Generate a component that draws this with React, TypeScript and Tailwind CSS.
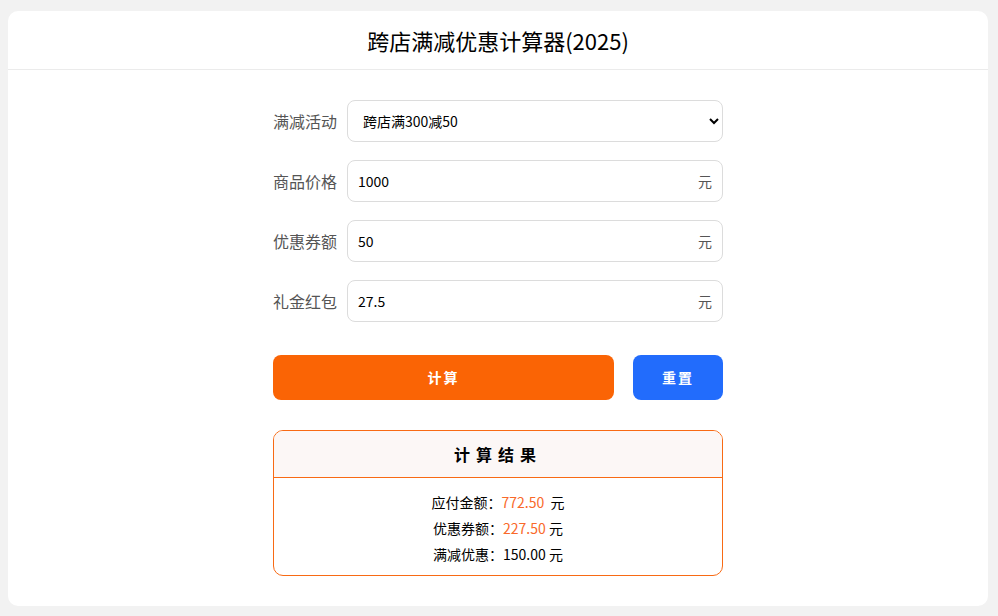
import { useState } from 'react';

const font = "font-['Noto_Sans_CJK_SC','Noto_Sans',sans-serif]";

function Field({ label, value, onChange }: { label: string; value: string; onChange: (v: string) => void }) {
  return (
    <div className="flex items-center">
      <label className="w-[74px] shrink-0 text-[16px] text-[#555]">{label}</label>
      <div className="flex h-[42px] flex-1 items-center rounded-[8px] border border-[#dcdcdc] bg-white pl-[10px] pr-[10px]">
        <input
          className="min-w-0 flex-1 bg-transparent text-[14px] text-black outline-none"
          value={value}
          onChange={(e) => onChange(e.target.value)}
        />
        <span className="text-[14px] text-[#555]">元</span>
      </div>
    </div>
  );
}

export default function App() {
  const [price, setPrice] = useState('1000');
  const [coupon, setCoupon] = useState('50');
  const [gift, setGift] = useState('27.5');

  return (
    <div className={`min-h-[616px] bg-[#f2f2f2] pl-2 pr-[10px] pt-[11px] pb-[10px] ${font}`}>
      <div className="rounded-[10px] bg-white pb-[30px]">
        <div className="flex h-[59px] items-center justify-center border-b border-[#ebebeb]">
          <h1 className="text-[22px] text-black">跨店满减优惠计算器(2025)</h1>
        </div>

        <div className="mx-auto mt-[30px] flex w-[450px] flex-col gap-[18px]">
          <div className="flex items-center">
            <label className="w-[74px] shrink-0 text-[16px] text-[#555]">满减活动</label>
            <select className="h-[42px] flex-1 rounded-[8px] border border-[#dcdcdc] bg-white pl-[11px] pr-[8px] text-[14px] text-black outline-none">
              <option>跨店满300减50</option>
              <option>跨店满200减30</option>
              <option>跨店满400减50</option>
            </select>
          </div>
          <Field label="商品价格" value={price} onChange={setPrice} />
          <Field label="优惠券额" value={coupon} onChange={setCoupon} />
          <Field label="礼金红包" value={gift} onChange={setGift} />
        </div>

        <div className="mx-auto mt-[33px] flex w-[450px] gap-[19px]">
          <button className="h-[45px] flex-1 rounded-[8px] bg-[#fa6405] text-[14px] font-bold tracking-[2px] text-white">计算</button>
          <button className="h-[45px] w-[90px] rounded-[8px] bg-[#226cfc] text-[14px] font-bold tracking-[2px] text-white">重置</button>
        </div>

        <div className="mx-auto mt-[30px] w-[450px] overflow-hidden rounded-[10px] border border-[#f86a14]">
          <div className="flex h-[47px] items-center justify-center border-b border-[#f86a14] bg-[#fcf7f6]">
            <span className="text-[16px] font-bold tracking-[6px] text-black">计算结果</span>
          </div>
          <div className="flex flex-col items-center pt-[11px] pb-[8px] text-[14px] leading-[26px] text-black">
            <div>应付金额：<span className="text-[#f9692a]">772.50</span>&nbsp;&nbsp;元</div>
            <div>优惠券额：<span className="text-[#f9692a]">227.50</span> 元</div>
            <div>满减优惠：150.00 元</div>
          </div>
        </div>
      </div>
    </div>
  );
}
